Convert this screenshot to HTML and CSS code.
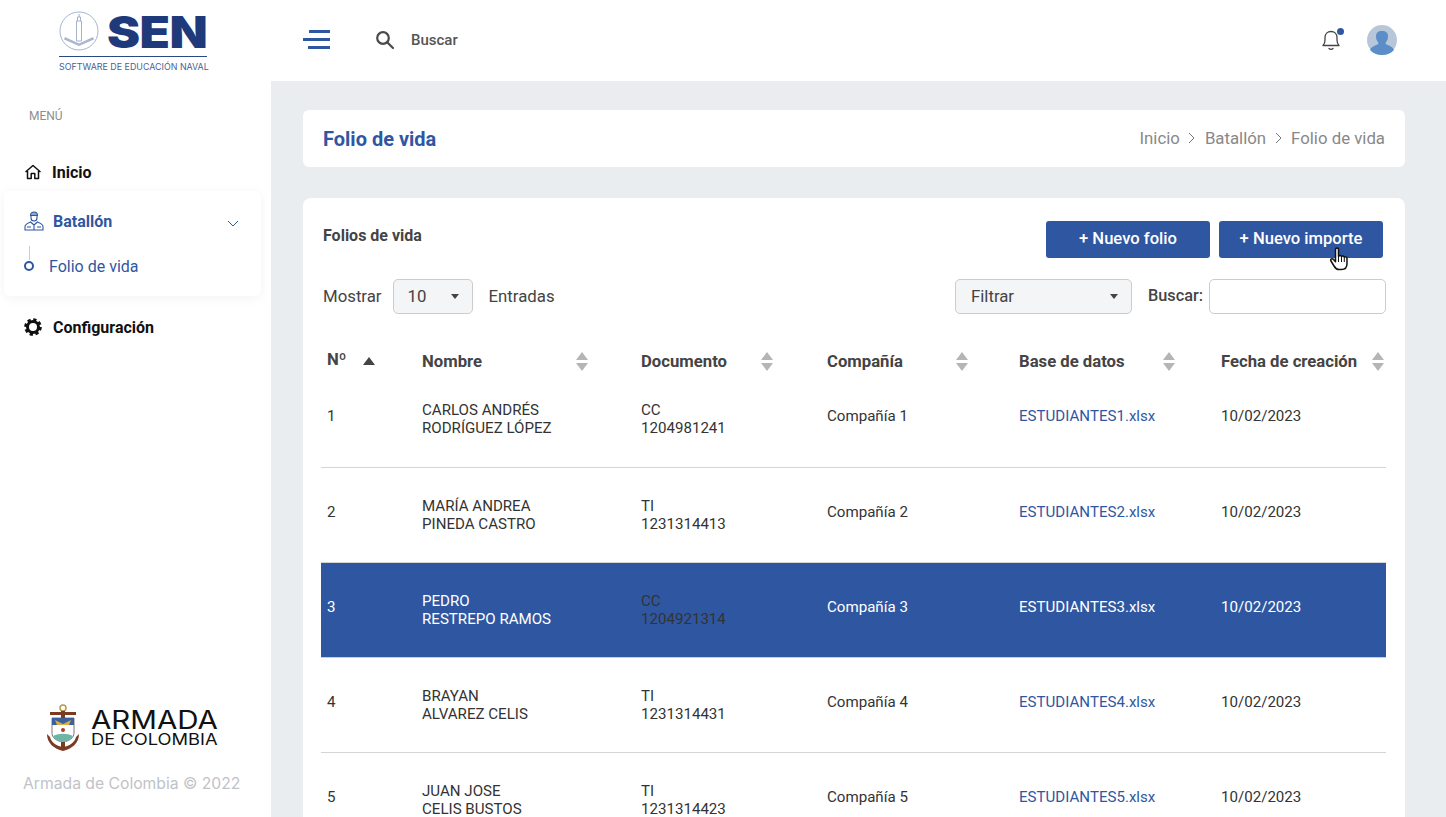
FILE: index.html
```html
<!DOCTYPE html>
<html lang="es">
<head>
    <meta charset="UTF-8">
    <title>Folio de vida</title>
    <link rel="stylesheet" href="styles.css">
</head>
<body>
    <div class="app">
        <aside class="sidebar">
            <div class="brand">
                <div class="brand-top">
                    <svg class="brand-mark" viewBox="0 0 40 40" width="40" height="40">
                        <circle cx="20" cy="20" r="19" fill="none" stroke="#8094bd" stroke-width="0.7"/>
                        <path d="M17.500 10h5v20h-5zM18.500 10V6h3v4M20 6V3" fill="none" stroke="#8ea0c4" stroke-width="0.8"/>
                        <path d="M6 26l14 6.500L34 26l1 2.500-15 6.500-15-6.500z" fill="#a9b6d0"/>
                    </svg>
                    <span class="brand-name">SEN</span>
                </div>
                <div class="brand-sub">SOFTWARE DE EDUCACIÓN NAVAL</div>
            </div>
            <div class="menu-label">MENÚ</div>
            <nav class="menu">
                <a class="menu-item" href="#">
                    <svg class="menu-icon" viewBox="0 0 18 18" width="18" height="18" fill="none" stroke="#111" stroke-width="1.500" stroke-linejoin="round">
                        <path d="M1.500 9L9 2.500 16.500 9M3.500 8v7.500h3.700v-5h3.600v5h3.700V8"/>
                    </svg>
                    <span>Inicio</span>
                </a>
                <div class="menu-group">
                    <a class="menu-item menu-item-active" href="#">
                        <svg class="menu-icon" viewBox="0 0 20 20" width="20" height="20" fill="none" stroke="#2f57a1" stroke-width="1.100">
                            <path d="M6.500 4.500c0-2 1.500-3.500 3.500-3.500s3.500 1.500 3.500 3.500z" fill="#8ea6d0"/>
                            <path d="M7 5v2c0 1.800 1.300 3 3 3s3-1.200 3-3V5"/>
                            <path d="M1 19v-3.500c0-2 2-3 5.500-4.500l3.500 3 3.500-3c3.500 1.500 5.500 2.500 5.500 4.500V19zM10 14v5M3 16h4M13 16h4"/>
                        </svg>
                        <span>Batallón</span>
                        <svg class="menu-chevron" viewBox="0 0 12 8" width="12" height="8" fill="none" stroke="#2f57a1" stroke-width="1">
                            <path d="M1 1l5 5 5-5"/>
                        </svg>
                    </a>
                    <a class="submenu-item" href="#">
                        <span class="submenu-dot"></span>
                        <span>Folio de vida</span>
                    </a>
                </div>
                <a class="menu-item menu-item-last" href="#">
                    <svg class="menu-icon" viewBox="0 0 18 18" width="18" height="18" fill="none" stroke="#111">
                        <circle cx="9" cy="9" r="5.500" stroke-width="3"/>
                        <circle cx="9" cy="9" r="7.300" stroke-width="3" stroke-dasharray="3.200 2.530"/>
                    </svg>
                    <span class="menu-strong">Configuración</span>
                </a>
            </nav>
            <div class="sidebar-foot">
                <div class="armada">
                    <svg class="armada-crest" viewBox="0 0 34 50" width="34" height="50">
                        <circle cx="17" cy="4" r="3" fill="none" stroke="#b99a4a" stroke-width="1.500"/>
                        <rect x="4" y="8" width="26" height="3" fill="#7b3a22"/>
                        <rect x="15" y="7" width="4" height="36" fill="#7b3a22"/>
                        <path d="M6 14h22v15c0 5-5 8-11 9-6-1-11-4-11-9z" fill="#fff" stroke="#555" stroke-width="0.800"/>
                        <path d="M6 14h22v7H6z" fill="#3c5f9e"/>
                        <path d="M9 16l8 4 8-4-2 5H11z" fill="#d7b13e"/>
                        <circle cx="17" cy="26" r="2" fill="#b5392c"/>
                        <path d="M7 32c6-3 14-3 20 0-2 4-6 6-10 6s-8-2-10-6z" fill="#6fb5a6"/>
                        <path d="M1 30c0 9 7 15 16 17 9-2 16-8 16-17l-3 3c-1 5-6 9-13 10-7-1-12-5-13-10z" fill="#7b3a22"/>
                    </svg>
                    <div class="armada-text">
                        <div class="armada-big">ARMADA</div>
                        <div class="armada-small">DE COLOMBIA</div>
                    </div>
                </div>
                <div class="copyright">Armada de Colombia © 2022</div>
            </div>
        </aside>

        <div class="content">
            <header class="topbar">
                <button class="burger" type="button">
                    <span class="burger-a"></span>
                    <span class="burger-b"></span>
                    <span class="burger-c"></span>
                </button>
                <svg class="top-search" viewBox="0 0 20 20" width="20" height="20" fill="none" stroke="#4a4a4a" stroke-width="2.200">
                    <circle cx="8" cy="8" r="5.800"/>
                    <path d="M12.500 12.500L18 18" stroke-linecap="round"/>
                </svg>
                <span class="top-search-label">Buscar</span>
                <div class="top-right">
                    <div class="bell">
                        <svg viewBox="0 0 20 22" width="20" height="22" fill="none" stroke="#444" stroke-width="1.300">
                            <path d="M2 16.500c1.500-1.500 2-2.500 2-5.500V8.500C4 5 6.500 2.500 10 2.500s6 2.500 6 6V11c0 3 .5 4 2 5.500z" stroke-linejoin="round"/>
                            <path d="M8 19.500c1 1 3 1 4 0" stroke-linecap="round"/>
                        </svg>
                        <span class="bell-dot"></span>
                    </div>
                    <svg class="avatar" viewBox="0 0 30 30" width="30" height="30">
                        <circle cx="15" cy="15" r="15" fill="#b7c7d9"/>
                        <path d="M3 25c1-3 4-4 7.500-5.500 1-.5 1-1.500.5-2.500-1.500-1.500-2-3.500-2-6 0-3 2-5 6-5s6 2 6 5c0 2.500-.5 4.500-2 6-.5 1-.5 2 .5 2.500 3.500 1.500 6.500 2.500 7.500 5.500-3 3.200-7 5-12 5s-9-1.800-12-5z" fill="#5b8ec9"/>
                    </svg>
                </div>
            </header>

            <main class="page">
                <section class="title-card">
                    <h1>Folio de vida</h1>
                    <div class="crumbs">
                        <span>Inicio</span>
                        <svg viewBox="0 0 8 12" width="8" height="12" fill="none" stroke="#777" stroke-width="1"><path d="M1 1l5 5-5 5"/></svg>
                        <span>Batallón</span>
                        <svg viewBox="0 0 8 12" width="8" height="12" fill="none" stroke="#777" stroke-width="1"><path d="M1 1l5 5-5 5"/></svg>
                        <span>Folio de vida</span>
                    </div>
                </section>

                <section class="table-card">
                    <div class="card-head">
                        <h2>Folios de vida</h2>
                        <div class="card-actions">
                            <button class="btn" type="button">+ Nuevo folio</button>
                            <button class="btn" type="button">+ Nuevo importe</button>
                            <svg class="cursor" viewBox="0 0 20 24" width="20" height="24">
                                <path d="M6.500 2.500c0-2 3-2 3 0v7c.5-1.500 3-1.500 3 .3.500-1.300 2.800-1.100 2.800.6.600-1 2.700-.8 2.700 1.100v5c0 3.500-2 6-5.500 6h-2.500c-2.500 0-3.500-1-5-3.500l-3-5c-1-2 1.200-3 2.500-1.500l2 2.200z" fill="#fff" stroke="#111" stroke-width="1.500" stroke-linejoin="round"/>
                                <path d="M9.500 10v5M12.500 10v5M15.300 11v4" stroke="#111" stroke-width="1"/>
                            </svg>
                        </div>
                    </div>

                    <div class="controls">
                        <div class="controls-left">
                            <span>Mostrar</span>
                            <div class="select select-small"><span>10</span><i class="caret"></i></div>
                            <span>Entradas</span>
                        </div>
                        <div class="controls-right">
                            <div class="select select-wide"><span>Filtrar</span><i class="caret"></i></div>
                            <label class="search-label">Buscar:</label>
                            <input class="search-input" type="text">
                        </div>
                    </div>

                    <table class="folios">
                        <colgroup>
                            <col class="col-n"><col class="col-name"><col class="col-doc">
                            <col class="col-comp"><col class="col-db"><col class="col-date">
                        </colgroup>
                        <thead>
                            <tr>
                                <th><div class="th-in th-first"><span>Nº</span><i class="sort-up"></i></div></th>
                                <th><div class="th-in"><span>Nombre</span><i class="sort sort-name"></i></div></th>
                                <th><div class="th-in"><span>Documento</span><i class="sort sort-doc"></i></div></th>
                                <th><div class="th-in"><span>Compañía</span><i class="sort sort-comp"></i></div></th>
                                <th><div class="th-in"><span>Base de datos</span><i class="sort sort-db"></i></div></th>
                                <th><div class="th-in"><span>Fecha de creación</span><i class="sort sort-date"></i></div></th>
                            </tr>
                        </thead>
                        <tbody>
                            <tr>
                                <td>1</td>
                                <td class="two">CARLOS ANDRÉS<br>RODRÍGUEZ LÓPEZ</td>
                                <td class="two">CC<br>1204981241</td>
                                <td>Compañía 1</td>
                                <td><a href="#">ESTUDIANTES1.xlsx</a></td>
                                <td>10/02/2023</td>
                            </tr>
                            <tr>
                                <td>2</td>
                                <td class="two">MARÍA ANDREA<br>PINEDA CASTRO</td>
                                <td class="two">TI<br>1231314413</td>
                                <td>Compañía 2</td>
                                <td><a href="#">ESTUDIANTES2.xlsx</a></td>
                                <td>10/02/2023</td>
                            </tr>
                            <tr class="selected">
                                <td>3</td>
                                <td class="two">PEDRO<br>RESTREPO RAMOS</td>
                                <td class="two doc-dark">CC<br>1204921314</td>
                                <td>Compañía 3</td>
                                <td><a href="#">ESTUDIANTES3.xlsx</a></td>
                                <td>10/02/2023</td>
                            </tr>
                            <tr>
                                <td>4</td>
                                <td class="two">BRAYAN<br>ALVAREZ CELIS</td>
                                <td class="two">TI<br>1231314431</td>
                                <td>Compañía 4</td>
                                <td><a href="#">ESTUDIANTES4.xlsx</a></td>
                                <td>10/02/2023</td>
                            </tr>
                            <tr>
                                <td>5</td>
                                <td class="two">JUAN JOSE<br>CELIS BUSTOS</td>
                                <td class="two">TI<br>1231314423</td>
                                <td>Compañía 5</td>
                                <td><a href="#">ESTUDIANTES5.xlsx</a></td>
                                <td>10/02/2023</td>
                            </tr>
                        </tbody>
                    </table>
                </section>
            </main>
        </div>
    </div>
</body>
</html>
```

FILE: styles.css
```css
* {
    box-sizing: border-box;
}
html, body {
    height: 100%;
    margin: 0;
    overflow: hidden;
}
body {
    font-family: 'Roboto', sans-serif;
    font-size: 15px;
    color: #333;
    background-color: #e9edf0;
}
a {
    text-decoration: none;
    color: inherit;
}
.app {
    display: flex;
    height: 100vh;
    overflow: hidden;
}

/* sidebar */
.sidebar {
    width: 271px;
    flex-shrink: 0;
    background-color: #fff;
    display: flex;
    flex-direction: column;
}
.brand {
    width: 148px;
    margin: 11px 0 0 59px;
}
.brand-top {
    display: flex;
    align-items: center;
    height: 40px;
    gap: 8px;
}
.brand-mark {
    flex-shrink: 0;
}
.brand-name {
    font-family: 'Inter', sans-serif;
    font-weight: 900;
    font-size: 44px;
    line-height: 40px;
    letter-spacing: -0.5px;
    color: #1f3a7a;
    transform: translateY(1px) scaleX(1.13);
    transform-origin: left center;
}
.brand-sub {
    border-top: 1px solid #2b4786;
    margin-top: 5px;
    padding-top: 5px;
    font-family: 'Inter', sans-serif;
    font-size: 8.9px;
    line-height: 9px;
    white-space: nowrap;
    color: #4a5f92;
}
.menu-label {
    margin: 38px 0 0 29px;
    font-size: 12px;
    line-height: 14px;
    color: #8d8d8d;
}
.menu {
    margin-top: 27px;
}
.menu-item {
    display: flex;
    align-items: center;
    height: 44px;
    padding-left: 24px;
    font-size: 16px;
    font-weight: 700;
    color: #111;
}
.menu-icon {
    margin-right: 10px;
    flex-shrink: 0;
}
.menu-strong {
    margin-left: 1px;
}
.menu-group {
    margin: -3px 10px 0 4px;
    height: 105px;
    background-color: #fff;
    border-radius: 6px;
    box-shadow: 0 2px 12px rgba(0, 0, 0, 0.05);
}
.menu-item-active {
    padding-left: 20px;
    color: #2f57a1;
    height: 60px;
}
.menu-item-active .menu-icon {
    margin-right: 9px;
}
.menu-item-last {
    margin-top: 9px;
}
.menu-chevron {
    margin-left: auto;
    margin-right: 22px;
    margin-top: 5px;
}
.submenu-item {
    position: relative;
    display: flex;
    align-items: center;
    margin-top: 3px;
    padding-left: 45px;
    height: 24px;
    font-size: 16px;
    color: #2f57a1;
}
.submenu-item::before {
    content: "";
    position: absolute;
    left: 25px;
    top: -8px;
    width: 1px;
    height: 14px;
    background-color: #ccc;
}
.submenu-dot {
    position: absolute;
    left: 20px;
    top: 7px;
    width: 10px;
    height: 10px;
    border: 2px solid #2f57a1;
    border-radius: 50%;
}
.sidebar-foot {
    margin-top: auto;
    padding-bottom: 24px;
}
.armada {
    display: flex;
    align-items: center;
    padding-left: 46px;
    gap: 11px;
}
.armada-text {
    color: #111;
    font-family: 'Inter', sans-serif;
    margin-top: -1px;
    transform: scaleX(1.18);
    transform-origin: left center;
}
.armada-big {
    font-size: 25px;
    line-height: 22px;
    white-space: nowrap;
}
.armada-small {
    font-size: 15.500px;
    line-height: 18px;
    white-space: nowrap;
}
.copyright {
    margin-top: 21px;
    padding-left: 23px;
    font-family: 'Inter', sans-serif;
    font-size: 15.700px;
    line-height: 18px;
    white-space: nowrap;
    color: #bfc3c8;
}

/* top bar */
.content {
    flex: 1;
    min-width: 0;
    display: flex;
    flex-direction: column;
}
.topbar {
    height: 81px;
    flex-shrink: 0;
    background-color: #fff;
    display: flex;
    align-items: center;
    padding: 0 49px 2px 32px;
}
.burger {
    width: 27px;
    height: 19px;
    padding: 0;
    border: none;
    background: none;
    display: flex;
    flex-direction: column;
    justify-content: space-between;
    align-items: flex-end;
}
.burger span {
    display: block;
    height: 3px;
    background-color: #2f57a1;
}
.burger-a { width: 21px; }
.burger-b { width: 27px; }
.burger-c { width: 22px; }
.top-search {
    margin-left: 45px;
}
.top-search-label {
    margin-left: 16px;
    font-weight: 500;
    color: #555;
}
.top-right {
    margin-left: auto;
    display: flex;
    align-items: center;
    gap: 26px;
}
.bell {
    position: relative;
    height: 22px;
}
.bell-dot {
    position: absolute;
    right: -3px;
    top: -1px;
    width: 7px;
    height: 7px;
    border-radius: 50%;
    background-color: #2f57a1;
}

/* page */
.page {
    flex: 1;
    min-height: 0;
    overflow: hidden;
    padding: 29px 41px 0 32px;
}
.title-card {
    height: 57px;
    background-color: #fff;
    border-radius: 6px;
    display: flex;
    align-items: center;
    justify-content: space-between;
    padding: 0 20px;
}
.title-card h1 {
    margin: 0;
    font-size: 20px;
    font-weight: 700;
    color: #2f57a1;
}
.crumbs {
    display: flex;
    align-items: center;
    gap: 8.500px;
    margin-top: -1px;
    font-size: 16.800px;
    color: #888;
}
.table-card {
    margin-top: 31px;
    height: 680px;
    overflow: hidden;
    background-color: #fff;
    border-radius: 8px;
    padding: 23px 19px 0 18px;
}
.card-head {
    display: flex;
    justify-content: space-between;
    height: 58px;
    padding-left: 2px;
}
.card-head h2 {
    margin: 6px 0 0;
    font-size: 16px;
    line-height: 18px;
    font-weight: 700;
    color: #444;
}
.card-actions {
    position: relative;
    display: flex;
    gap: 9px;
    padding-right: 3px;
}
.btn {
    width: 164px;
    height: 37px;
    padding: 0 0 2px;
    border: none;
    border-radius: 3px;
    background-color: #2f57a1;
    color: #fff;
    font-family: 'Roboto', sans-serif;
    font-size: 16.600px;
    font-weight: 500;
}
.cursor {
    position: absolute;
    left: 283px;
    top: 26px;
}
.controls {
    display: flex;
    justify-content: space-between;
    align-items: center;
    height: 35px;
    padding-left: 2px;
    font-size: 16.800px;
    color: #444;
}
.controls-left,
.controls-right {
    display: flex;
    align-items: center;
}
.controls span,
.search-label {
    margin-top: -2px;
}
.select {
    height: 35px;
    display: flex;
    align-items: center;
    justify-content: space-between;
    background-color: #f4f5f7;
    border: 1px solid #ccc;
    border-radius: 5px;
}
.select-small {
    width: 80px;
    margin: 0 16px 0 11px;
    padding: 0 13px 0 14px;
}
.select-wide {
    width: 177px;
    padding: 0 13px 0 15px;
}
.caret {
    width: 0;
    height: 0;
    border-left: 4.500px solid transparent;
    border-right: 4.500px solid transparent;
    border-top: 5px solid #444;
}
.search-label {
    margin: -2px 6px 0 16px;
    font-size: 16.300px;
    font-weight: 500;
}
.search-input {
    width: 177px;
    height: 35px;
    border: 1.500px solid #ccc;
    border-radius: 5px;
    background-color: #fff;
}

/* table */
.folios {
    width: 1065px;
    margin-top: 30px;
    border-collapse: collapse;
    table-layout: fixed;
}
.col-n { width: 95px; }
.col-name { width: 219px; }
.col-doc { width: 186px; }
.col-comp { width: 192px; }
.col-db { width: 202px; }
.col-date { width: 171px; }
.folios th {
    height: 28px;
    padding: 7px 0 0 6px;
    text-align: left;
    font-size: 16.700px;
    font-weight: 700;
    color: #444;
}
.th-in {
    display: flex;
    align-items: center;
    position: relative;
    height: 19px;
    margin-top: -1px;
}
.th-first span {
    margin-top: -3px;
}
.sort-up {
    margin-left: 17px;
    width: 0;
    height: 0;
    border-left: 6.500px solid transparent;
    border-right: 6.500px solid transparent;
    border-bottom: 8px solid #444;
}
.sort {
    position: relative;
    width: 13px;
    height: 19px;
    margin-left: auto;
}
.sort::before,
.sort::after {
    content: "";
    position: absolute;
    left: 0;
    border-left: 6.500px solid transparent;
    border-right: 6.500px solid transparent;
}
.sort::before {
    top: 0;
    border-bottom: 8px solid #b5b5b5;
}
.sort::after {
    bottom: 0;
    border-top: 8px solid #b5b5b5;
}
.sort-name { margin-right: 46px; }
.sort-doc { margin-right: 47px; }
.sort-comp { margin-right: 44px; }
.sort-db { margin-right: 39px; }
.sort-date { margin-right: 1px; }
.folios td {
    height: 95px;
    padding: 0 0 6px 6px;
    font-size: 15.100px;
    line-height: 18px;
    color: #333;
    border-bottom: 1px solid #d5d5d5;
}
.folios td.two {
    padding-bottom: 0;
}
.folios td a {
    color: #2f57a1;
}
.folios .selected td {
    background-color: #2f57a1;
    color: #fff;
    border-bottom: 1px solid #c8cdd6;
}
.folios .selected td a {
    color: #fff;
}
.folios .selected .doc-dark {
    color: #333;
}
```
